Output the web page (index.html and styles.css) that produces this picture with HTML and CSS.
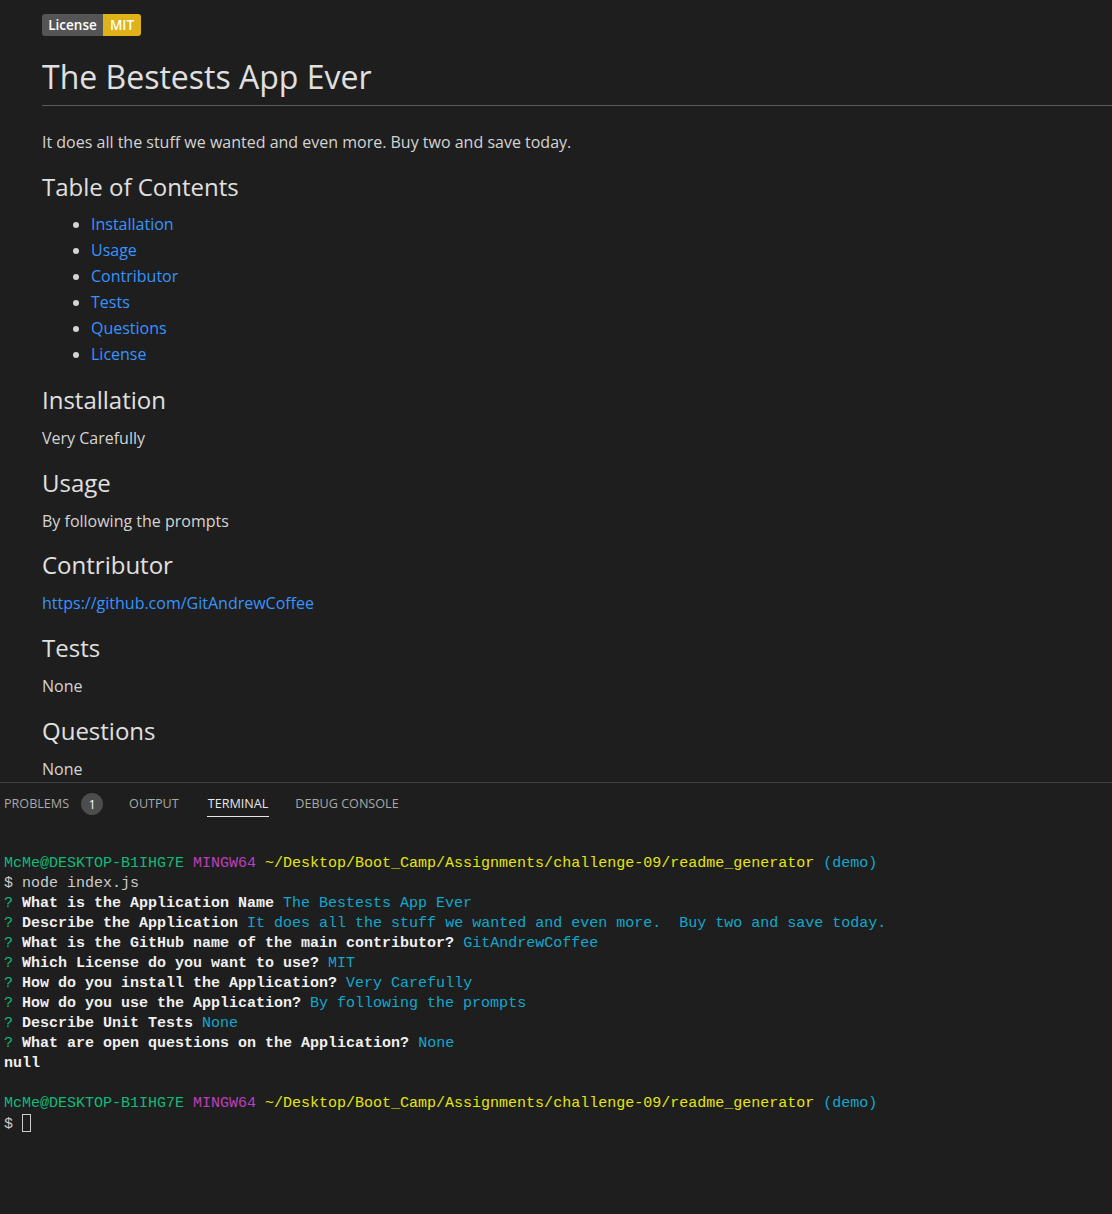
FILE: index.html
```html
<!DOCTYPE html>
<html>
<head>
<meta charset="utf-8">
<link rel="stylesheet" href="styles.css">
</head>
<body>
<div class="preview">
  <div class="badge"><span class="b-left">License</span><span class="b-right">MIT</span></div>
  <h1 class="title">The Bestests App Ever</h1>
  <p class="para">It does all the stuff we wanted and even more. Buy two and save today.</p>
  <h2 class="h2">Table of Contents</h2>
  <ul class="toc">
    <li><a class="link">Installation</a></li>
    <li><a class="link">Usage</a></li>
    <li><a class="link">Contributor</a></li>
    <li><a class="link">Tests</a></li>
    <li><a class="link">Questions</a></li>
    <li><a class="link">License</a></li>
  </ul>
  <h2 class="h2">Installation</h2>
  <p class="para">Very Carefully</p>
  <h2 class="h2">Usage</h2>
  <p class="para">By following the prompts</p>
  <h2 class="h2">Contributor</h2>
  <p class="para"><a class="link">https://github.com/GitAndrewCoffee</a></p>
  <h2 class="h2">Tests</h2>
  <p class="para">None</p>
  <h2 class="h2">Questions</h2>
  <p class="para">None</p>
</div>
<div class="panel">
  <div class="tabs">
    <span class="tab t-problems">PROBLEMS</span><span class="count">1</span>
    <span class="tab t-output">OUTPUT</span>
    <span class="tab t-terminal active">TERMINAL</span>
    <span class="tab">DEBUG CONSOLE</span>
  </div>
  <div class="term">
    <div class="line"><span class="g">McMe@DESKTOP-B1IHG7E</span> <span class="m">MINGW64</span> <span class="y">~/Desktop/Boot_Camp/Assignments/challenge-09/readme_generator</span> <span class="c">(demo)</span></div>
    <div class="line">$ node index.js</div>
    <div class="line"><span class="g">?</span> <b>What is the Application Name</b> <span class="c">The Bestests App Ever</span></div>
    <div class="line"><span class="g">?</span> <b>Describe the Application</b> <span class="c">It does all the stuff we wanted and even more.  Buy two and save today.</span></div>
    <div class="line"><span class="g">?</span> <b>What is the GitHub name of the main contributor?</b> <span class="c">GitAndrewCoffee</span></div>
    <div class="line"><span class="g">?</span> <b>Which License do you want to use?</b> <span class="c">MIT</span></div>
    <div class="line"><span class="g">?</span> <b>How do you install the Application?</b> <span class="c">Very Carefully</span></div>
    <div class="line"><span class="g">?</span> <b>How do you use the Application?</b> <span class="c">By following the prompts</span></div>
    <div class="line"><span class="g">?</span> <b>Describe Unit Tests</b> <span class="c">None</span></div>
    <div class="line"><span class="g">?</span> <b>What are open questions on the Application?</b> <span class="c">None</span></div>
    <div class="line"><b>null</b></div>
    <div class="line"> </div>
    <div class="line"><span class="g">McMe@DESKTOP-B1IHG7E</span> <span class="m">MINGW64</span> <span class="y">~/Desktop/Boot_Camp/Assignments/challenge-09/readme_generator</span> <span class="c">(demo)</span></div>
    <div class="line">$ <span class="cursor"></span></div>
  </div>
</div>
</body>
</html>
```
FILE: styles.css
```css
html, body {
  margin: 0;
  padding: 0;
  background: #1e1e1e;
  overflow: hidden;
}
body {
  width: 1112px;
  height: 1214px;
  color: #d4d4d4;
  font-family: "Open Sans", "Noto Sans", sans-serif;
}
.preview {
  height: 782px;
  padding-left: 42px;
  box-sizing: border-box;
  overflow: hidden;
}
.badge {
  display: inline-flex;
  margin-top: 14px;
  height: 22px;
  border-radius: 3px;
  overflow: hidden;
  font-size: 13.5px;
  font-weight: 600;
  line-height: 22px;
  color: #fff;
}
.b-left {
  background: #555;
  width: 61px;
  text-align: center;
}
.b-right {
  background: #dfb317;
  width: 38px;
  text-align: center;
}
.title {
  margin: 21px 0 0 0;
  font-size: 32px;
  font-weight: 400;
  line-height: 40px;
  padding-bottom: 8px;
  border-bottom: 1px solid #5a5a5a;
  color: #e0e0e0;
}
.para {
  margin: 0;
  font-size: 16px;
  line-height: 24px;
  height: 24px;
}
.title + .para {
  margin-top: 24px;
}
.h2 {
  margin: 0;
  font-size: 24px;
  font-weight: 400;
  line-height: 30px;
  height: 30px;
  color: #e0e0e0;
}
.para + .h2 {
  margin-top: 17.7px;
}
.title + .para + .h2 {
  margin-top: 18px;
}
.h2 + .para {
  margin-top: 11px;
}
.toc {
  margin: 9px 0 0 0;
  padding-left: 49px;
  font-size: 16px;
  line-height: 26px;
}
.toc li::marker {
  color: #d4d4d4;
}
.toc + .h2 {
  margin-top: 18px;
}
.link {
  color: #3794ff;
  text-decoration: none;
}
.panel {
  border-top: 1px solid #414141;
  height: 431px;
}
.tabs {
  display: flex;
  align-items: center;
  height: 42px;
  padding-left: 4px;
  font-size: 12.6px;
  color: #a8a8a8;
}
.tab {
  line-height: 16px;
}
.t-problems {
  margin-right: 12px;
}
.count {
  display: inline-flex;
  justify-content: center;
  align-items: center;
  width: 22px;
  height: 22px;
  border-radius: 50%;
  background: #4d4d4d;
  color: #fff;
  font-size: 12px;
  margin-right: 26px;
}
.t-output {
  margin-right: 29px;
}
.t-terminal {
  margin-right: 27px;
}
.tab.active {
  color: #e7e7e7;
  position: relative;
}
.tab.active::after {
  content: "";
  position: absolute;
  left: -1px;
  right: -1px;
  bottom: -5px;
  height: 1px;
  background: #e7e7e7;
}
.term {
  padding: 29px 0 0 4px;
  font-family: "Liberation Mono", "DejaVu Sans Mono", monospace;
  font-size: 15px;
  color: #cccccc;
}
.line {
  white-space: pre;
  line-height: 20px;
  height: 20px;
}
.term b {
  color: #f0f0f0;
  font-weight: 700;
}
.g { color: #0dbc79; }
.m { color: #bc3fbc; }
.y { color: #e5e510; }
.c { color: #11a8cd; }
.cursor {
  display: inline-block;
  width: 9px;
  height: 18px;
  border: 1px solid #cccccc;
  box-sizing: border-box;
  vertical-align: -4px;
}
```
